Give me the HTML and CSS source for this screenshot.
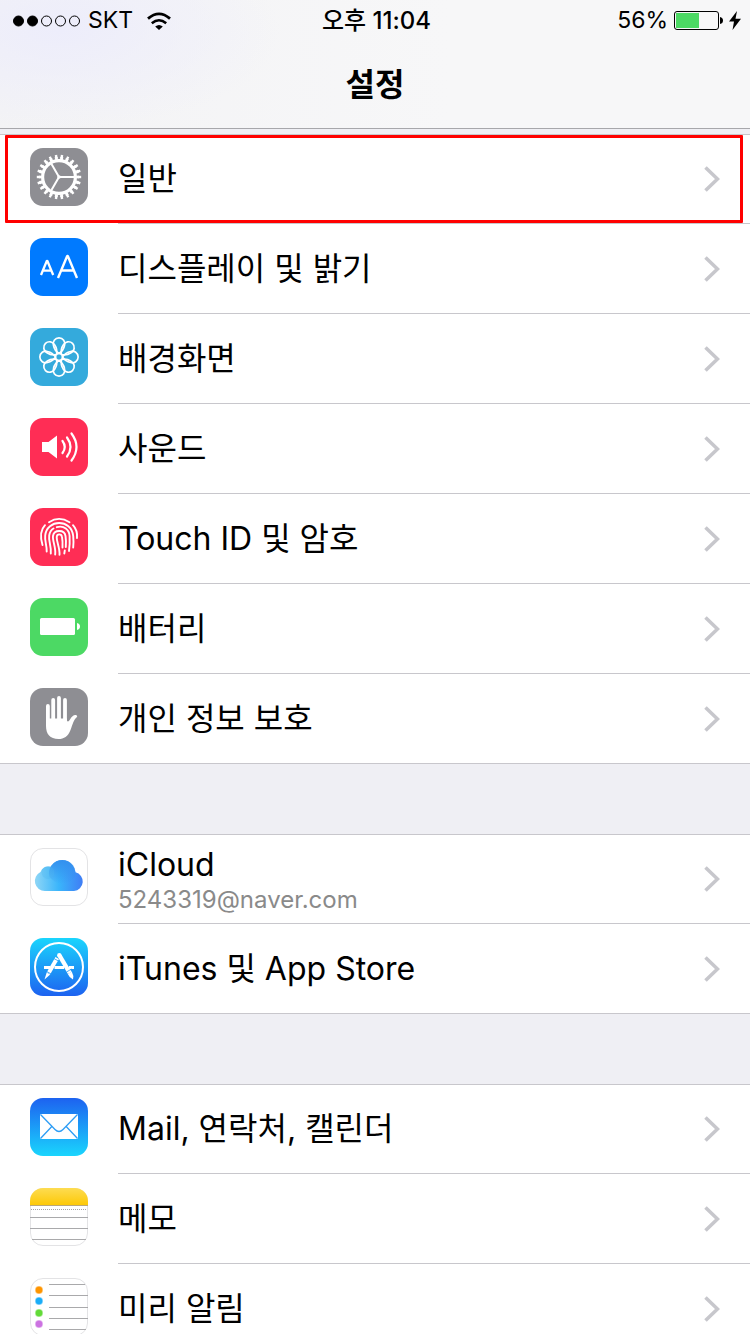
FILE: index.html
```html
<!DOCTYPE html>
<html lang="ko">
<head>
<meta charset="utf-8">
<meta name="viewport" content="width=device-width, initial-scale=1">
<title>설정</title>
<link rel="stylesheet" href="styles.css">
</head>
<body>
<svg class="defs" aria-hidden="true">
  <defs>
    <symbol id="chevron" viewBox="0 0 16 26"><path d="M1.5 1.5 13.5 13 1.5 24.5" fill="none" stroke="#c7c7cc" stroke-width="3.6"/></symbol>
    <path id="petal" d="M0-3.500Q-4.500-6.500-5.500-11.500A5.800 5.800 0 1 1 5.500-11.500Q4.500-6.500 0-3.500Z"/>
    <linearGradient id="store" x1="0" y1="0" x2="0" y2="1"><stop offset="0" stop-color="#1ad5fd"/><stop offset="1" stop-color="#1d62f0"/></linearGradient>
    <linearGradient id="mail" x1="0" y1="0" x2="0" y2="1"><stop offset="0" stop-color="#1d62f0"/><stop offset="1" stop-color="#1ad5fd"/></linearGradient>
    <linearGradient id="cloud" x1="0" y1="0" x2="1" y2="0"><stop offset="0" stop-color="#8fd6f6"/><stop offset=".5" stop-color="#3ab5fb"/><stop offset="1" stop-color="#3f7df5"/></linearGradient>
    <linearGradient id="puff" x1="0" y1="0" x2="0" y2="1"><stop offset="0" stop-color="#3390ee"/><stop offset="1" stop-color="#3390ee" stop-opacity="0"/></linearGradient>
    <linearGradient id="note" x1="0" y1="0" x2="0" y2="1"><stop offset="0" stop-color="#fddc52"/><stop offset="1" stop-color="#fdc907"/></linearGradient>
    <clipPath id="tile"><rect width="58" height="58" rx="13"/></clipPath>
  </defs>
</svg>
<div class="screen">
  <header class="bar">
    <div class="status">
      <div class="status-left">
        <svg class="signal" viewBox="0 0 70 14" aria-hidden="true">
          <g stroke="#000"><circle cx="6.5" cy="7" r="5"/><circle cx="20.5" cy="7" r="5"/><g fill="none"><circle cx="34.5" cy="7" r="5"/><circle cx="48.5" cy="7" r="5"/><circle cx="62.5" cy="7" r="5"/></g></g>
        </svg>
        <span>SKT</span>
        <svg class="wifi" viewBox="0 0 24 18" aria-hidden="true"><path d="M8.2 14.4Q12 11.4 15.8 14.4L12 18Z"/><g fill="none" stroke="#000" stroke-width="2.5"><path d="M4.8 11.2Q12 5.2 19.2 11.2"/><path d="M1 6.6Q12-2.9 23 6.6" stroke-width="2.8"/></g></svg>
      </div>
      <time class="clock">오후 11:04</time>
      <div class="status-right">
        <span>56%</span>
        <svg class="battery" viewBox="0 0 49 19" aria-hidden="true"><rect x=".5" y=".5" width="44" height="18" rx="2.5" fill="none" stroke="#000"/><rect x="2" y="2" width="23" height="15" fill="#4cd964"/><path d="M46 6q3 .5 3 3.5t-3 3.5z"/></svg>
        <svg class="bolt" viewBox="0 0 12 19" aria-hidden="true"><path d="M8 0 0 10.5H5L3.500 19 12 7.800H6.500Z"/></svg>
      </div>
    </div>
    <h1 class="title">설정</h1>
  </header>
  <main class="list">
    <nav class="group">
      <a class="row marked" href="#general">
        <svg class="icon" viewBox="0 0 58 58" aria-hidden="true"><rect width="58" height="58" rx="13" fill="#8e8e93"/><g fill="none" stroke="#fff"><circle cx="29" cy="29" r="16.400" stroke-width="3.200"/><circle cx="29" cy="29" r="18.800" stroke-width="3" pathLength="220" stroke-dasharray="5.600 4.400" stroke-dashoffset="2.800"/><circle cx="29" cy="29" r="20.700" stroke-width="3" pathLength="220" stroke-dasharray="4 6" stroke-dashoffset="2"/><path d="M29 29H44M29 29 21.500 16M29 29 21.500 42" stroke-width="2"/></g><circle cx="29" cy="29" r="1.800" fill="#fff"/></svg>
        <span class="cell"><span class="label">일반</span><svg class="chevron" aria-hidden="true"><use href="#chevron"/></svg></span>
      </a>
      <a class="row" href="#display">
        <svg class="icon" viewBox="0 0 58 58" aria-hidden="true"><rect width="58" height="58" rx="13" fill="#007aff"/><g fill="none" stroke="#fff" stroke-linejoin="bevel"><path d="M11 37 16.900 22.800H17.300L23.200 37M13 32.600H21.200" stroke-width="2.300"/><path d="M28 40 37.200 18H37.800L47 40M31.300 32.500H43.700" stroke-width="2.400"/></g></svg>
        <span class="cell"><span class="label">디스플레이 및 밝기</span><svg class="chevron" aria-hidden="true"><use href="#chevron"/></svg></span>
      </a>
      <a class="row" href="#wallpaper">
        <svg class="icon" viewBox="0 0 58 58" aria-hidden="true"><rect width="58" height="58" rx="13" fill="#34aadc"/><g transform="translate(29 29)" fill="none" stroke="#fff" stroke-width="1.700"><use href="#petal"/><use href="#petal" transform="rotate(45)"/><use href="#petal" transform="rotate(90)"/><use href="#petal" transform="rotate(135)"/><use href="#petal" transform="rotate(180)"/><use href="#petal" transform="rotate(225)"/><use href="#petal" transform="rotate(270)"/><use href="#petal" transform="rotate(315)"/><circle r="3.500"/></g></svg>
        <span class="cell"><span class="label">배경화면</span><svg class="chevron" aria-hidden="true"><use href="#chevron"/></svg></span>
      </a>
      <a class="row" href="#sounds">
        <svg class="icon" viewBox="0 0 58 58" aria-hidden="true"><rect width="58" height="58" rx="13" fill="#ff2d55"/><path d="M12 24h6.500L27 17.500v23L18.500 34H12z" fill="#fff"/><g fill="none" stroke="#fff" stroke-width="2.200" stroke-linecap="round"><path d="M32.500 23Q37 29 32.500 35"/><path d="M37 19.500Q44 29 37 38.500"/><path d="M41.500 15.500Q51.500 29 41.500 42.500"/></g></svg>
        <span class="cell"><span class="label">사운드</span><svg class="chevron" aria-hidden="true"><use href="#chevron"/></svg></span>
      </a>
      <a class="row" href="#touchid">
        <svg class="icon" viewBox="0 0 58 58" aria-hidden="true"><rect width="58" height="58" rx="13" fill="#ff2d55"/><g fill="none" stroke="#fff" stroke-width="1.900" stroke-linecap="round"><path d="M19 14.200Q29 7.600 39.500 14.200"/><path d="M12.500 37Q8.500 24 15 17.200"/><path d="M43 17.200Q47.800 22.500 47 30"/><path d="M16.700 43.500C17 37 14.500 34 15.200 27.500C16.800 11 41.500 10.500 43.200 28Q43.800 34 43.200 39.500"/><path d="M20.800 45.500C21.500 38 18.300 33 19.200 27.500Q20 22.500 23.500 20.500"/><path d="M26.800 19.200C34 17 39.300 22 39.600 28Q40 36 39 43"/><path d="M25.200 46.500C26 39 22.300 33 23 28C24 21.300 34.500 21.300 35.500 28Q36.300 33 35.800 39"/><path d="M29.500 46.800C30 40 26.500 34 26.700 29C27 25.500 31.500 25.500 32 29Q32.800 33 32.500 39.500"/><path d="M34.800 42.500 34.300 45.500"/></g></svg>
        <span class="cell"><span class="label">Touch ID 및 암호</span><svg class="chevron" aria-hidden="true"><use href="#chevron"/></svg></span>
      </a>
      <a class="row" href="#battery">
        <svg class="icon" viewBox="0 0 58 58" aria-hidden="true"><rect width="58" height="58" rx="13" fill="#4cd964"/><g fill="#fff"><rect x="10" y="20" width="35" height="17" rx="1.500"/><path d="M47 25q3 .8 3 3.500t-3 3.500z"/></g></svg>
        <span class="cell"><span class="label">배터리</span><svg class="chevron" aria-hidden="true"><use href="#chevron"/></svg></span>
      </a>
      <a class="row" href="#privacy">
        <svg class="icon" viewBox="0 0 58 58" aria-hidden="true"><rect width="58" height="58" rx="13" fill="#8e8e93"/><g fill="none" stroke="#fff" stroke-linecap="round" stroke-width="3.800"><path d="M17.900 17.900V32M23.200 11.900V32M29 9.900V32M35 12V32"/></g><path d="M16 30.500H36.900V32.500Q38 34.800 40 31.500C42 28 44 26.500 46.500 27.200Q48 28 46.500 29.500C43.500 32 42.500 37 40.500 42C38 48.500 34 51 28.500 51C20 51 16 46 16 38Z" fill="#fff"/></svg>
        <span class="cell"><span class="label">개인 정보 보호</span><svg class="chevron" aria-hidden="true"><use href="#chevron"/></svg></span>
      </a>
    </nav>
    <nav class="group">
      <a class="row" href="#icloud">
        <svg class="icon" viewBox="0 0 58 58" aria-hidden="true"><rect x=".5" y=".5" width="57" height="57" rx="12.500" fill="#fff" stroke="#e3e3e5"/><path d="M15 43A10 10 0 0 1 10.500 24A8 8 0 0 1 20.500 18.800A13.500 13.500 0 0 1 45.500 24.300A9.500 9.500 0 0 1 44 43Z" fill="url(#cloud)"/><path d="M19.500 29A13.300 13.300 0 1 1 45 29Q32 43 19.500 29Z" fill="url(#puff)"/><circle cx="18" cy="24.500" r="6.500" fill="#4bb7ef" opacity=".3"/></svg>
        <span class="cell"><span class="text"><span class="label">iCloud</span><span class="detail">5243319@naver.com</span></span><svg class="chevron" aria-hidden="true"><use href="#chevron"/></svg></span>
      </a>
      <a class="row" href="#store">
        <svg class="icon" viewBox="0 0 58 58" aria-hidden="true"><rect width="58" height="58" rx="13" fill="url(#store)"/><circle cx="29" cy="29" r="24" fill="none" stroke="#fff" stroke-width="2"/><g fill="none" stroke="#fff"><path d="M14 29.500H20M24.500 29.500H34M39 29.500H44" stroke-width="3"/><path d="M27.200 20 18.500 35.300" stroke-width="4"/><path d="M29.500 17.500 39.800 35" stroke-width="4.400"/></g><circle cx="29.300" cy="17.200" r="2.200" fill="#fff"/><path d="M16.700 34.500 20.200 36.500 14.500 41.500ZM37.800 36 41.800 33.800Q44 37.500 43 41.500Q39.500 40 37.800 36Z" fill="#fff"/><path d="M23.800 20.500 28.500 23M16.500 33.300 21.500 36.200M36.500 34 41.500 31" stroke="#209bf8" stroke-width=".8"/></svg>
        <span class="cell"><span class="label">iTunes 및 App Store</span><svg class="chevron" aria-hidden="true"><use href="#chevron"/></svg></span>
      </a>
    </nav>
    <nav class="group">
      <a class="row" href="#mail">
        <svg class="icon" viewBox="0 0 58 58" aria-hidden="true"><rect width="58" height="58" rx="13" fill="url(#mail)"/><rect x="10" y="16" width="38" height="25" rx="1" fill="#fff"/><g fill="none" stroke="#2d9df5" stroke-width="1.300"><path d="M10.500 16.500 25 31.500Q29 35.500 33 31.500L47.500 16.500M10.500 40.500 21.800 28.500M47.500 40.500 36.200 28.500"/></g></svg>
        <span class="cell"><span class="label">Mail, 연락처, 캘린더</span><svg class="chevron" aria-hidden="true"><use href="#chevron"/></svg></span>
      </a>
      <a class="row" href="#notes">
        <svg class="icon" viewBox="0 0 58 58" aria-hidden="true"><rect x=".5" y=".5" width="57" height="57" rx="12.500" fill="#fff" stroke="#e3e3e5"/><g clip-path="url(#tile)"><rect width="58" height="17" fill="url(#note)"/><path d="M0 17.500H58" stroke="#b9a878"/><path d="M0 29.500H58M0 40.500H58M2 51.500H56" stroke="#a9a9ab"/><path d="M1 21.500H57" stroke="#a3a3a5" stroke-dasharray="1 1"/></g></svg>
        <span class="cell"><span class="label">메모</span><svg class="chevron" aria-hidden="true"><use href="#chevron"/></svg></span>
      </a>
      <a class="row" href="#reminders">
        <svg class="icon" viewBox="0 0 58 58" aria-hidden="true"><rect x=".5" y=".5" width="57" height="57" rx="12.500" fill="#fff" stroke="#e3e3e5"/><path d="M19 6.500H55M19 17.500H58M19 29.500H58M19 40.500H58M19 51.500H56" stroke="#a9a9ab"/><g stroke-opacity=".55" stroke-width="1.600"><circle cx="9" cy="12" r="3.200" fill="#ff9500" stroke="#ff9500"/><circle cx="9" cy="23" r="3.200" fill="#1badf8" stroke="#1badf8"/><circle cx="9" cy="35" r="3.200" fill="#63da38" stroke="#63da38"/><circle cx="9" cy="46" r="3.200" fill="#cc73e1" stroke="#cc73e1"/></g></svg>
        <span class="cell"><span class="label">미리 알림</span><svg class="chevron" aria-hidden="true"><use href="#chevron"/></svg></span>
      </a>
    </nav>
  </main>
</div>
</body>
</html>
```
FILE: styles.css
```css
* { box-sizing: border-box; }

body {
  margin: 0;
  background: #efeff4;
  color: #000;
  font-family: Inter, "Noto Sans CJK KR", sans-serif;
}

.defs {
  position: absolute;
  width: 0;
  height: 0;
}

.screen {
  display: flex;
  flex-direction: column;
  height: 100vh;
  overflow: hidden;
}

.bar {
  flex: none;
  padding-bottom: 19px;
  border-bottom: 1px solid #a7a7ab;
  background:
    radial-gradient(ellipse 220px 100px at 60px 30px, #ededfb, transparent),
    linear-gradient(to right, #f3f3f5, #f7f7f8 60%);
}

.status {
  display: grid;
  grid-template-columns: 1fr auto 1fr;
  align-items: center;
  height: 41px;
  padding: 0 9px 0 12px;
  font-size: 23px;
  line-height: 41px;
}

.status-left,
.status-right {
  display: flex;
  align-items: center;
}

.status-left { gap: 6px; }

.status-right {
  justify-content: flex-end;
  gap: 6px;
}

.signal { width: 70px; height: 14px; }
.wifi { width: 24px; height: 18px; margin-left: 8px; }
.battery { width: 49px; height: 19px; }
.bolt { width: 12px; height: 19px; }

.clock {
  font-size: 24px;
  font-weight: 500;
}

.title {
  margin: 20px 0 0;
  font-size: 32px;
  font-weight: 600;
  line-height: 48px;
  text-align: center;
}

.list {
  display: flex;
  flex: 1;
  flex-direction: column;
  gap: 70px;
  min-height: 0;
  padding-top: 5px;
  overflow: hidden;
}

.group {
  flex: none;
  background: #fff;
  box-shadow: inset 0 1px #c8c7cc, inset 0 -1px #c8c7cc;
}

.row {
  position: relative;
  display: flex;
  gap: 30px;
  padding-left: 30px;
  color: inherit;
  text-decoration: none;
}

.marked::after {
  content: "";
  position: absolute;
  inset: 1px 7px 1px 5px;
  border: 3px solid #f00;
  border-radius: 1px;
}

.icon {
  flex: none;
  width: 58px;
  height: 58px;
  margin-top: 14px;
}

.cell {
  display: flex;
  flex: 1;
  align-items: center;
  justify-content: space-between;
  min-height: 90px;
  padding-right: 30px;
  border-bottom: 1px solid #c8c7cc;
}

.row:last-child .cell { border-bottom-color: transparent; }

.text {
  display: flex;
  flex-direction: column;
  padding-top: 2px;
}

.label {
  font-size: 32px;
  line-height: 40px;
}

.detail {
  color: #8a8a8a;
  font-size: 24px;
  line-height: 30px;
}

.chevron {
  flex: none;
  width: 16px;
  height: 26px;
}
```
